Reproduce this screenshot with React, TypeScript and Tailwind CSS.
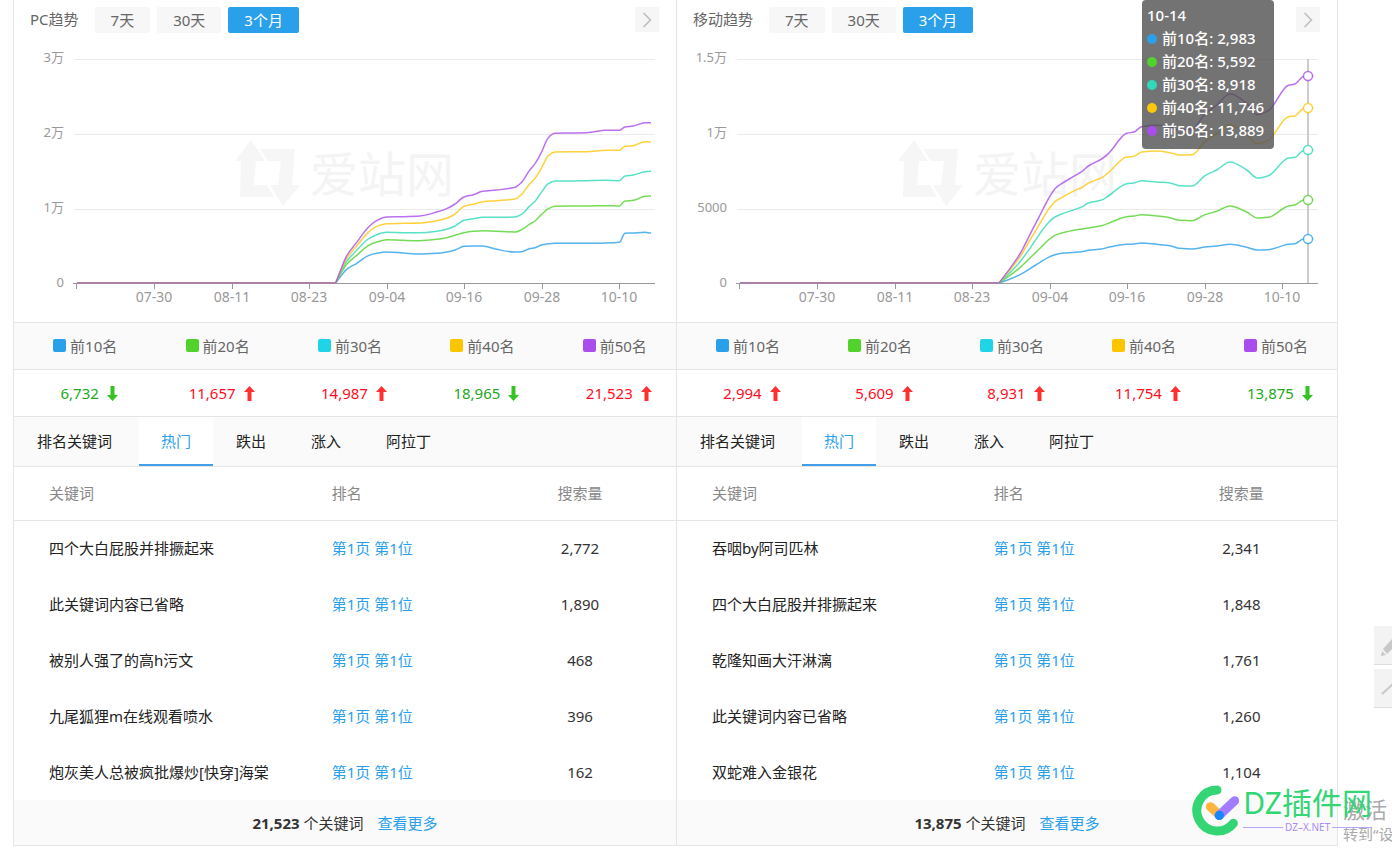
import { useState } from "react";
import clsx from "clsx";

type Rank = { label: string; color: string; swatch: string };
type Keyword = { word: string; volume: string };
type Trend = {
  id: string;
  title: string;
  yLabels: string[];
  x: number[];
  lines: number[][];
  originX: number;
  counts: { value: string; up: boolean }[];
  keywords: Keyword[];
  total: string;
};

const RANKS: Rank[] = [
  { label: "前10名", color: "#2ba0ea", swatch: "bg-[#2ba0ea]" },
  { label: "前20名", color: "#52d22c", swatch: "bg-[#52d22c]" },
  { label: "前30名", color: "#2fd9b9", swatch: "bg-[#20d4e6]" },
  { label: "前40名", color: "#fec60c", swatch: "bg-[#fbc600]" },
  { label: "前50名", color: "#a94eec", swatch: "bg-[#a94eec]" },
];

const DATES = ["07-30", "08-11", "08-23", "09-04", "09-16", "09-28", "10-10"];
const PERIODS = ["7天", "30天", "3个月"];
const TABS = ["热门", "跌出", "涨入", "阿拉丁"];

// line samples: three units per pixel
const PC: Trend = {
  id: "pc",
  title: "PC趋势",
  yLabels: ["3万", "2万", "1万", "0"],
  originX: 306,
  x: [47, 60, 80, 110, 145, 170, 200, 250, 300, 350, 380, 405, 432, 460, 488, 530, 585, 605, 628, 645, 664, 685, 705, 750, 800, 858, 898, 915, 940, 975, 993],
  lines: [
    [849, 832, 808, 790, 767, 760, 756, 759, 762, 760, 756, 750, 739, 738, 738, 748, 756, 755, 746, 743, 735, 731, 730, 730, 730, 729, 727, 700, 699, 697, 699],
    [849, 825, 793, 766, 737, 726, 719, 721, 722, 718, 713, 706, 698, 694, 692, 694, 696, 689, 673, 663, 644, 626, 619, 618, 618, 617, 618, 603, 601, 589, 588],
    [849, 822, 784, 751, 717, 704, 697, 698, 698, 694, 688, 678, 661, 656, 652, 652, 651, 643, 619, 604, 577, 551, 543, 543, 542, 541, 542, 528, 525, 515, 514],
    [849, 818, 776, 738, 697, 679, 671, 670, 669, 662, 655, 642, 619, 613, 605, 602, 597, 583, 553, 535, 505, 467, 456, 455, 455, 451, 451, 439, 437, 425, 426],
    [849, 815, 768, 727, 682, 662, 651, 650, 648, 636, 626, 612, 591, 584, 574, 570, 562, 547, 512, 491, 458, 413, 400, 399, 398, 391, 391, 381, 378, 368, 368],
  ],
  counts: [
    { value: "6,732", up: false },
    { value: "11,657", up: true },
    { value: "14,987", up: true },
    { value: "18,965", up: false },
    { value: "21,523", up: true },
  ],
  keywords: [
    { word: "四个大白屁股并排撅起来", volume: "2,772" },
    { word: "此关键词内容已省略", volume: "1,890" },
    { word: "被别人强了的高h污文", volume: "468" },
    { word: "九尾狐狸m在线观看喷水", volume: "396" },
    { word: "炮灰美人总被疯批爆炒[快穿]海棠", volume: "162" },
  ],
  total: "21,523",
};

const MOBILE: Trend = {
  id: "mobile",
  title: "移动趋势",
  yLabels: ["1.5万", "1万", "5000", "0"],
  originX: 343,
  x: [-63, -30, 0, 30, 60, 85, 105, 125, 165, 185, 205, 245, 265, 320, 342, 365, 410, 450, 478, 516, 555, 590, 630, 680, 712, 745, 805, 825, 850, 880],
  lines: [
    [849, 837, 824, 806, 787, 772, 764, 760, 757, 755, 751, 747, 742, 733, 732, 729, 733, 737, 745, 747, 741, 738, 733, 742, 750, 749, 733, 731, 717, 716],
    [849, 826, 803, 774, 745, 720, 706, 699, 690, 687, 684, 677, 670, 650, 648, 644, 648, 653, 661, 662, 644, 634, 618, 636, 654, 652, 618, 615, 600, 599],
    [849, 818, 785, 745, 700, 668, 651, 642, 628, 621, 609, 600, 588, 551, 549, 542, 546, 549, 557, 558, 527, 510, 486, 510, 534, 527, 474, 472, 452, 450],
    [849, 810, 771, 720, 670, 629, 605, 593, 571, 563, 549, 533, 518, 471, 469, 456, 453, 458, 465, 464, 425, 401, 374, 403, 431, 421, 350, 348, 326, 324],
    [849, 805, 762, 703, 645, 597, 566, 551, 527, 515, 498, 477, 461, 400, 396, 380, 376, 381, 390, 388, 342, 315, 281, 310, 344, 332, 256, 252, 230, 229],
  ],
  counts: [
    { value: "2,994", up: true },
    { value: "5,609", up: true },
    { value: "8,931", up: true },
    { value: "11,754", up: true },
    { value: "13,875", up: false },
  ],
  keywords: [
    { word: "吞咽by阿司匹林", volume: "2,341" },
    { word: "四个大白屁股并排撅起来", volume: "1,848" },
    { word: "乾隆知画大汗淋漓", volume: "1,761" },
    { word: "此关键词内容已省略", volume: "1,260" },
    { word: "双蛇难入金银花", volume: "1,104" },
  ],
  total: "13,875",
};

const HOVER = ["2,983", "5,592", "8,918", "11,746", "13,889"];
const HOVER_Y = [194, 155, 105, 63, 31];

// monotone-ish smoothing: horizontal handles limited by the neighbouring slope
function smoothPath(pts: number[][]) {
  const slope = pts.map((p, i) => {
    if (i === 0 || i === pts.length - 1) return 0;
    const a = (p[1] - pts[i - 1][1]) / (p[0] - pts[i - 1][0]);
    const b = (pts[i + 1][1] - p[1]) / (pts[i + 1][0] - p[0]);
    return a * b <= 0 ? 0 : (2 * a * b) / (a + b);
  });
  slope[0] = (pts[1][1] - pts[0][1]) / (pts[1][0] - pts[0][0]);
  let d = `M63,238H${pts[0][0]}`;
  for (let i = 1; i < pts.length; i++) {
    const [x0, y0] = pts[i - 1];
    const [x1, y1] = pts[i];
    const h = (x1 - x0) / 3;
    d += `C${x0 + h},${y0 + slope[i - 1] * h} ${x1 - h},${y1 - slope[i] * h} ${x1},${y1}`;
  }
  return d;
}

function Chart({ trend, hover }: { trend: Trend; hover?: boolean }) {
  return (
    <svg viewBox="0 0 662 277" preserveAspectRatio="xMinYMin slice" className="block h-[277px] w-full" role="img" aria-label={trend.title}>
      <g fill="#f6f6f6">
        <path d="M237 95 221 116H227L226 152H260L253 140H240L242 116H251Z" />
        <path d="M246 104H281L278 140H286L269 161L256 140H264L267 116H254Z" />
        <text x="296" y="147" fontSize="48" fill="#f4f4f4">
          爱站网
        </text>
      </g>
      {trend.yLabels.map((label, i) => (
        <g key={label}>
          {i < 3 && <path d={`M60 ${14.5 + i * 75}H641`} stroke="#ebebeb" />}
          <text x="50" y={17 + i * 75} textAnchor="end" fontSize="13" fill="#999">
            {label}
          </text>
        </g>
      ))}
      <path d="M59 238.5H641M62.5 239v5" stroke="#999" />
      {DATES.map((date, i) => {
        const x = Math.round(140 + i * 77.5);
        return (
          <g key={date}>
            <path d={`M${x + 0.5} 239v5`} stroke="#999" />
            <text x={x} y="257" textAnchor="middle" fontSize="14" fill="#999">
              {date}
            </text>
          </g>
        );
      })}
      {hover && <path d="M631 14V238" stroke="#ccc" strokeWidth="2" />}
      {trend.lines.map((ys, i) => (
        <path
          key={RANKS[i].label}
          d={smoothPath(ys.map((y, j) => [trend.originX + trend.x[j] / 3, y / 3 - 45]))}
          fill="none"
          stroke={RANKS[i].color}
          strokeWidth="1.5"
          strokeOpacity="0.8"
        />
      ))}
      {hover &&
        HOVER_Y.map((y, i) => <circle key={y} cx="631" cy={y} r="4.5" fill="#fff" stroke={RANKS[i].color} strokeOpacity="0.8" strokeWidth="1.4" />)}
    </svg>
  );
}

function Tooltip() {
  return (
    <div className="absolute top-0 right-[63px] w-[132px] rounded-[4px] bg-[#505050]/80 pt-1 pb-[7px] pl-[5px] text-[15px] leading-[23px] font-medium whitespace-nowrap text-white">
      <div>10-14</div>
      {RANKS.map((r, i) => (
        <div key={r.label} className="flex items-center gap-[5px]">
          <svg width="10" height="10" className="shrink-0">
            <circle cx="5" cy="5" r="5" fill={r.color} />
          </svg>
          <span>
            {r.label}: {HOVER[i]}
          </span>
        </div>
      ))}
    </div>
  );
}

function Arrow({ up }: { up: boolean }) {
  return (
    <svg width="11" height="15" viewBox="0 0 11 15" className={up ? "fill-[#ff3030]" : "rotate-180 fill-[#35c522]"}>
      <path d="M5.5 0 11 6H7.5V15H3.5V6H0Z" />
    </svg>
  );
}

function Panel({ trend, hover }: { trend: Trend; hover?: boolean }) {
  const [period, setPeriod] = useState("3个月");
  const [tab, setTab] = useState("热门");

  return (
    <section className="relative min-w-0 border-l border-[#e5e5e5]">
      <div className="flex h-[45px] items-start gap-[7px] pt-[7px] pr-[17px] pl-4">
        <h2 className="mr-[9px] leading-[24px] text-[#666]">{trend.title}</h2>
        {PERIODS.map((p) => (
          <button
            key={p}
            onClick={() => setPeriod(p)}
            className={clsx("h-[26px] rounded-[2px] px-4 leading-[26px]", p === period ? "bg-[#2ba0ea] text-white" : "bg-[#f7f7f7] text-[#666]")}
          >
            {p}
          </button>
        ))}
        <button aria-label="更多" className="ml-auto flex h-[25px] w-6 items-center justify-center bg-[#f6f6f6]">
          <svg width="10" height="16" viewBox="0 0 10 16" fill="none" stroke="#bbb" strokeWidth="1.5">
            <path d="M1.500 1 8.500 8 1.500 15" />
          </svg>
        </button>
      </div>
      <Chart trend={trend} hover={hover} />
      {hover && <Tooltip />}

      <div className="grid h-[47px] grid-cols-5 border-t border-[#e5e5e5] bg-[#fafafa] pb-px text-[#666]">
        {RANKS.map((r) => (
          <div key={r.label} className="flex items-center justify-center gap-1 pl-[10px]">
            <span className={clsx("size-[13px] rounded-[2px]", r.swatch)} />
            {r.label}
          </div>
        ))}
      </div>
      <div className="grid h-[47px] grid-cols-5 border-t border-[#e5e5e5]">
        {trend.counts.map((c) => (
          <div key={c.value} className={clsx("flex items-center justify-center gap-2 pl-[18px]", c.up ? "text-[#ff0d1e]" : "text-[#22a81c]")}>
            {c.value}
            <Arrow up={c.up} />
          </div>
        ))}
      </div>

      <div className="flex h-[51px] gap-px border-y border-[#e5e5e5] bg-[#fafafa] text-[#222]">
        <h3 className="w-[124px] pl-[23px] leading-[49px]">排名关键词</h3>
        {TABS.map((t) => (
          <button
            key={t}
            onClick={() => setTab(t)}
            className={clsx("border-b-2 px-[22px]", t === tab ? "border-[#459fe8] bg-white text-[#2ba0ea]" : "border-transparent")}
          >
            {t}
          </button>
        ))}
      </div>

      <table className="w-full table-fixed">
        <thead>
          <tr className="h-[53px] border-b border-[#e5e5e5] text-[#888]">
            <th className="w-[48%] pl-[35px] text-left font-normal">关键词</th>
            <th className="w-[23%] text-left font-normal">排名</th>
            <th className="font-normal">搜索量</th>
          </tr>
        </thead>
        <tbody>
          {trend.keywords.map((k) => (
            <tr key={k.word} className="h-14 text-[#222]">
              <td className="truncate pl-[35px]">{k.word}</td>
              <td>
                <a href="#" className="text-[#2ba0ea]">
                  第1页 第1位
                </a>
              </td>
              <td className="text-center text-[#333]">{k.volume}</td>
            </tr>
          ))}
        </tbody>
      </table>
      <div className="flex h-[46px] items-center justify-center border-b border-[#e5e5e5] bg-[#fafafa] text-[#333]">
        <b className="mr-1">{trend.total}</b> 个关键词
        <a href="#" className="ml-[14px] text-[#2ba0ea]">
          查看更多
        </a>
      </div>
    </section>
  );
}

function SideTools() {
  return (
    <div className="absolute top-[626px] right-0 flex w-[18px] flex-col gap-1 overflow-hidden">
      <button aria-label="反馈" className="h-[39px] border-b border-[#ddd] bg-[#f3f3f3]">
        <svg width="18" height="38" viewBox="0 0 18 38" fill="#c8c8c8">
          <path d="M7 30 8 25 12 29ZM9 23 19 12 24 17 13 28Z" />
        </svg>
      </button>
      <button aria-label="返回顶部" className="h-[39px] border-b border-[#ddd] bg-[#f3f3f3]">
        <svg width="18" height="38" viewBox="0 0 18 38" fill="none" stroke="#c8c8c8" strokeWidth="2">
          <path d="M8 25 20 14 32 25" />
        </svg>
      </button>
    </div>
  );
}

function SiteLogo() {
  return (
    <div className="absolute top-[784px] right-5 flex items-start gap-[3px]">
      <svg width="50" height="53" viewBox="30 520 150 159" fill="none" strokeWidth="27" strokeLinecap="round">
        <path d="M111 538A61.500 61.500 0 1 0 160 638" stroke="#33d574" />
        <path d="M91 588 118 613" stroke="#ffb43c" />
        <path d="M164 570 118 614" stroke="#a27dff" />
        <circle cx="118" cy="614" r="14" fill="#1687ff" />
      </svg>
      <div>
        <div className="text-[30px] leading-[38px] text-[#33d574]">DZ插件网</div>
        <div className="flex items-center gap-[2px] text-[10px] leading-[10px] text-[#a78bfa]">
          <span className="h-px flex-1 bg-[#b9a4fb]" />
          DZ–X.NET
          <span className="h-px flex-1 bg-[#b9a4fb]" />
        </div>
      </div>
    </div>
  );
}

export default function App() {
  return (
    <div className="relative h-screen overflow-hidden bg-white font-['Noto_Sans','Noto_Sans_CJK_SC',sans-serif] text-[15px] leading-[22px]">
      <main className="mr-[54px] ml-[13px] grid grid-cols-[663fr_661fr] border-r border-[#e5e5e5]">
        <Panel trend={PC} />
        <Panel trend={MOBILE} hover />
      </main>
      <SideTools />
      <div className="absolute top-[795px] left-[1343px] whitespace-nowrap text-[#aaa]">
        <div className="text-[22px] leading-[28px]">激活</div>
        <div>转到“设置”</div>
      </div>
      <SiteLogo />
    </div>
  );
}
